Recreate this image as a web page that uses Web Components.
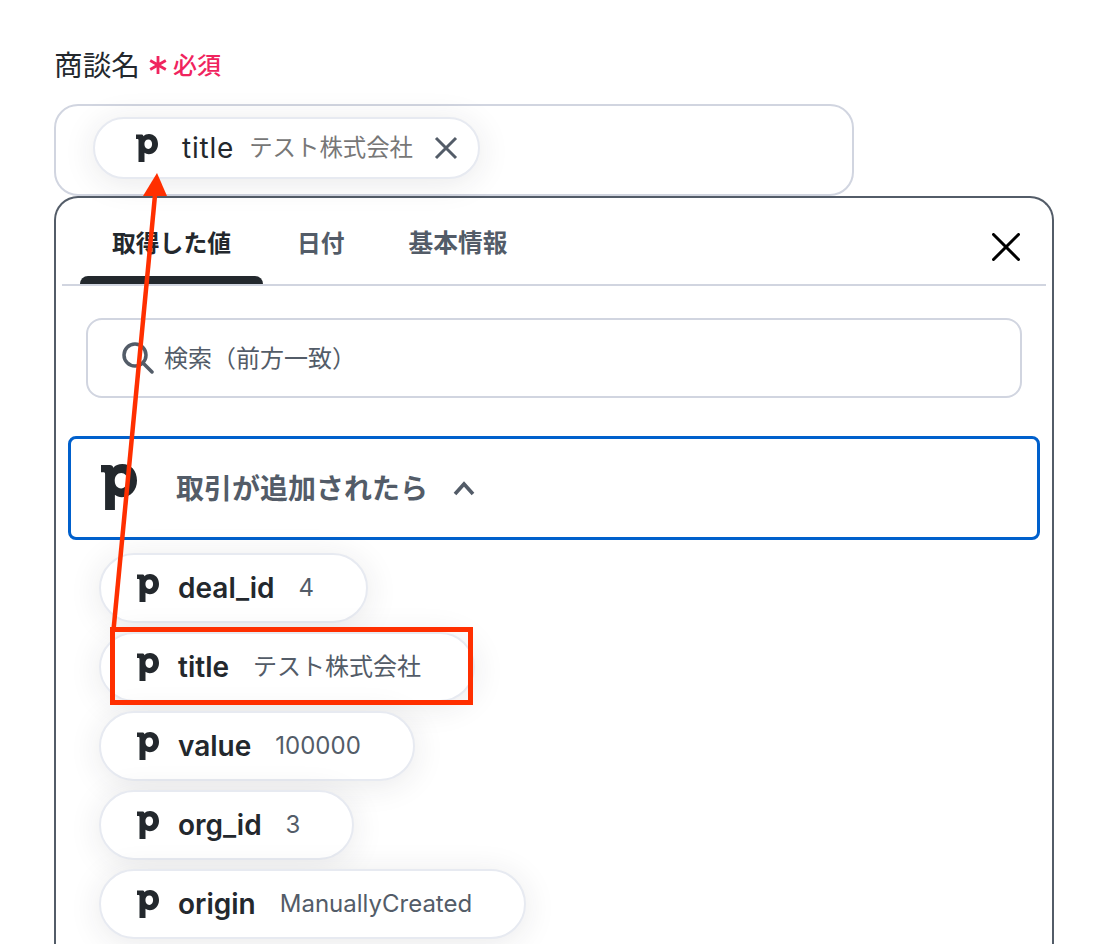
<!DOCTYPE html>
<html lang="ja">
<head>
<meta charset="utf-8">
<title>商談名</title>
<style>
  html, body { margin: 0; height: 944px; overflow: hidden; background: #fff; }
  body { font-family: Inter, "Noto Sans CJK JP", sans-serif; color: #23282d; position: relative; }
</style>
</head>
<body>
<form-page>
  <field-label text="商談名" required="必須"></field-label>
  <token-input>
    <value-chip slot="token" variant="token" name="title" value="テスト株式会社"></value-chip>
  </token-input>
  <picker-panel>
    <picker-tabs slot="tabs"></picker-tabs>
    <search-box slot="search" placeholder="検索（前方一致）"></search-box>
    <source-header slot="source" text="取引が追加されたら"></source-header>
    <value-chip name="deal_id" value="4"></value-chip>
    <value-chip name="title" value="テスト株式会社"></value-chip>
    <value-chip name="value" value="100000"></value-chip>
    <value-chip name="org_id" value="3"></value-chip>
    <value-chip name="origin" value="ManuallyCreated"></value-chip>
  </picker-panel>
</form-page>
<call-out></call-out>

<script>
// pipedrive "p" mark, shared by chips and the source header
const P_PATH = 'M0 .6h5.400c1.200 0 1.900.6 2.100 1.600C8.800.8 10.600 0 13 0c5.300 0 9 4.200 9 10 0 5.900-3.900 10.200-9.200 10.200-1.800 0-3.200-.5-4.300-1.400V28H2.500V6.200c0-.9-.3-1.200-1.100-1.200H0z M12.400 5.400c-2.500 0-4 1.900-4 4.700 0 2.800 1.500 4.800 3.900 4.800 2.300 0 3.800-1.900 3.800-4.800 0-2.900-1.500-4.700-3.700-4.700z';
const pLogo = (w, h) => `<svg width="${w}" height="${h}" viewBox="0 0 22 28" aria-hidden="true"><path fill="#23282d" fill-rule="evenodd" d="${P_PATH}"/></svg>`;

class FormPage extends HTMLElement {
  constructor() {
    super();
    this.attachShadow({ mode: 'open' });
    this.shadowRoot.innerHTML = `
      <style>
        :host { display: block; padding: 44px 50px 0 54px; }
      </style>
      <slot></slot>
    `;
  }
}

class FieldLabel extends HTMLElement {
  constructor() {
    super();
    this.attachShadow({ mode: 'open' });
    this.shadowRoot.innerHTML = `
      <style>
        :host { display: flex; align-items: center; height: 42px; margin-bottom: 18px; padding-bottom: 4px; box-sizing: border-box; }
        .text { font-size: 28.700px; color: #23282d; }
        .star { margin-left: 9px; margin-top: 4px; display: flex; }
        .req { margin-left: 6px; font-size: 24px; color: #f0245e; font-weight: 500; }
      </style>
      <span class="text">${this.getAttribute('text')}</span>
      <span class="star">
        <svg width="18" height="20" viewBox="0 0 18 20"><path d="M9 1v18M1.200 5.500l15.600 9M16.800 5.500l-15.600 9" stroke="#f0245e" stroke-width="2.800" fill="none"/></svg>
      </span>
      <span class="req">${this.getAttribute('required')}</span>
    `;
  }
}

class TokenInput extends HTMLElement {
  constructor() {
    super();
    this.attachShadow({ mode: 'open' });
    this.shadowRoot.innerHTML = `
      <style>
        :host {
          display: flex; align-items: flex-start; box-sizing: border-box;
          width: 800px; height: 92px; padding: 11px 37px;
          border: 2px solid #d1d5e0; border-radius: 24px; background: #fff;
        }
      </style>
      <slot name="token"></slot>
    `;
  }
}

class ValueChip extends HTMLElement {
  constructor() {
    super();
    this.attachShadow({ mode: 'open' });
    const token = this.getAttribute('variant') === 'token';
    const value = this.getAttribute('value');
    const cjk = /[^\x00-\x7f]/.test(value);
    this.shadowRoot.innerHTML = `
      <style>
        :host {
          display: flex; width: fit-content; align-items: center; box-sizing: border-box;
          background: #fff; border: 2px solid #e7eaf1; border-radius: 40px;
          box-shadow: 0 4px 32px rgba(35, 40, 45, .1);
          height: 70px; padding: 0 52px 1px 36px; margin-bottom: 9px;
        }
        :host([variant="token"]) {
          height: 62px; padding: 0 19px 0 40px; margin: 0;
        }
        svg { flex: none; display: block; }
        .name { margin-left: 19px; font-size: 28px; font-weight: 600; color: #23282d; }
        .value { margin-left: 24px; font-size: 24px; color: #535c68; }
        .value.cjk { margin-bottom: 4px; }
        :host([variant="token"]) .name { margin-left: 23px; font-size: 28px; font-weight: 400; letter-spacing: .8px; }
        :host([variant="token"]) .value { margin-left: 15px; font-size: 23.400px; color: #777; }
        .x { margin-left: 20px; }
      </style>
      ${token ? pLogo(24, 28) : pLogo(22, 28)}
      <span class="name">${this.getAttribute('name')}</span>
      <span class="value${cjk ? ' cjk' : ''}">${value}</span>
      ${token ? `<svg class="x" width="26" height="26" viewBox="0 0 26 26"><path d="M3 3l20 20M23 3L3 23" stroke="#535c68" stroke-width="3" fill="none"/></svg>` : ''}
    `;
  }
}

class PickerPanel extends HTMLElement {
  constructor() {
    super();
    this.attachShadow({ mode: 'open' });
    this.shadowRoot.innerHTML = `
      <style>
        :host {
          display: block; box-sizing: border-box; width: 1000px; height: 748px;
          border: 2px solid #535c68; border-bottom: 0; border-radius: 24px 24px 0 0; background: #fff;
          overflow: hidden;
        }
        .list { padding: 13px 0 0 43px; }
      </style>
      <slot name="tabs"></slot>
      <slot name="search"></slot>
      <slot name="source"></slot>
      <div class="list"><slot></slot></div>
    `;
  }
}

class PickerTabs extends HTMLElement {
  constructor() {
    super();
    this.attachShadow({ mode: 'open' });
    this.shadowRoot.innerHTML = `
      <style>
        :host {
          display: flex; align-items: stretch; box-sizing: border-box; height: 88px; margin: 0 6px; padding-left: 18px;
          border-bottom: 2px solid #d1d5e0;
        }
        .tab { position: relative; display: flex; align-items: center; padding: 0 32px;
          font-size: 23.800px; font-weight: 600; color: #535c68; }
        .tab.wide { font-size: 24.700px; }
        .tab.on { color: #23282d; margin-right: 2px; }
        .tab.on::after {
          content: ''; position: absolute; left: 0; right: 0; bottom: 0; height: 8px;
          background: #23282d; border-radius: 8px 8px 0 0;
        }
        .close { margin: 35px 26px 0 auto; }
      </style>
      <div class="tab on">取得した値</div>
      <div class="tab">日付</div>
      <div class="tab wide">基本情報</div>
      <svg class="close" width="28" height="28" viewBox="0 0 28 28"><path d="M1.500 1.500l25 25M26.500 1.500l-25 25" stroke="#000" stroke-width="3" stroke-linecap="round" fill="none"/></svg>
    `;
  }
}

class SearchBox extends HTMLElement {
  constructor() {
    super();
    this.attachShadow({ mode: 'open' });
    this.shadowRoot.innerHTML = `
      <style>
        :host {
          display: flex; align-items: center; box-sizing: border-box; height: 80px; margin: 32px 30px 38px;
          padding: 0 0 0 34px; border: 2px solid #d1d5e0; border-radius: 16px; background: #fff;
        }
        span { margin-left: 10px; margin-bottom: 4px; font-size: 24px; color: #535c68; }
      </style>
      <svg width="32" height="32" viewBox="0 0 32 32"><circle cx="13" cy="13" r="11" fill="none" stroke="#535c68" stroke-width="3.500"/><path d="M21 21l9 9" stroke="#535c68" stroke-width="3.500" stroke-linecap="round"/></svg>
      <span>${this.getAttribute('placeholder')}</span>
    `;
  }
}

class SourceHeader extends HTMLElement {
  constructor() {
    super();
    this.attachShadow({ mode: 'open' });
    this.shadowRoot.innerHTML = `
      <style>
        :host {
          display: flex; align-items: center; box-sizing: border-box; height: 104px; margin: 0 12px;
          padding: 0 0 2px 30px; border: 3.500px solid #0060cc; border-radius: 8px; background: #fff;
        }
        .t { margin-left: 39px; font-size: 28px; font-weight: 600; color: #535c68; }
        .c { margin-left: 25px; margin-top: 2px; }
      </style>
      ${pLogo(36, 46)}
      <span class="t">${this.getAttribute('text')}</span>
      <svg class="c" width="22" height="16" viewBox="0 0 22 16"><path d="M2 14L11 4l9 10" fill="none" stroke="#535c68" stroke-width="3.600"/></svg>
    `;
  }
}

// red annotation drawn on top of the screenshot
class CallOut extends HTMLElement {
  constructor() {
    super();
    this.attachShadow({ mode: 'open' });
    this.shadowRoot.innerHTML = `
      <style>
        :host { position: absolute; inset: 0; pointer-events: none; }
        svg { display: block; }
      </style>
      <svg width="1104" height="944" viewBox="0 0 1104 944">
        <rect x="112.500" y="629.500" width="358" height="73" fill="none" stroke="#ff2f00" stroke-width="5"/>
        <path d="M113.500 630L155.500 190" stroke="#ff2f00" stroke-width="4.500" fill="none"/>
        <path d="M157 173L143 196H167z" fill="#ff2f00"/>
      </svg>
    `;
  }
}

customElements.define('form-page', FormPage);
customElements.define('field-label', FieldLabel);
customElements.define('token-input', TokenInput);
customElements.define('value-chip', ValueChip);
customElements.define('picker-panel', PickerPanel);
customElements.define('picker-tabs', PickerTabs);
customElements.define('search-box', SearchBox);
customElements.define('source-header', SourceHeader);
customElements.define('call-out', CallOut);
</script>
</body>
</html>
